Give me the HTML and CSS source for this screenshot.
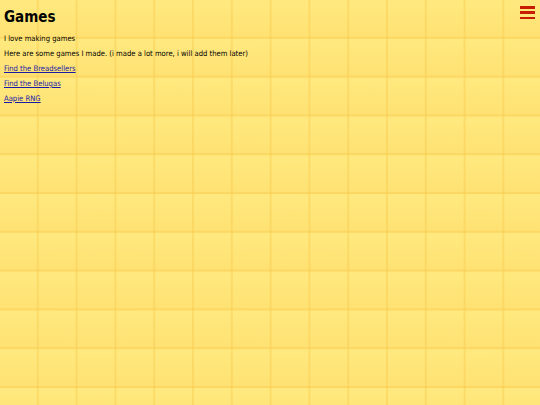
FILE: index.html
```html
<!DOCTYPE html>
<html lang="en">
<head>
<meta charset="utf-8">
<title>Games</title>
<link rel="stylesheet" href="styles.css">
</head>
<body>
<button class="menu" aria-label="Menu"><span></span><span></span><span></span></button>
<h1 class="title">Games</h1>
<p class="text">I love making games</p>
<p class="text">Here are some games I made. (i made a lot more, i will add them later)</p>
<p class="text"><a href="#">Find the Breadsellers</a></p>
<p class="text"><a href="#">Find the Belugas</a></p>
<p class="text"><a href="#">Aapie RNG</a></p>
</body>
</html>
```
FILE: styles.css
```css
html {
  min-height: 100%;
  background-color: #ffe477;
  background-image:
    linear-gradient(to right, transparent 37.3px, rgba(247, 203, 80, 0.45) 37.3px),
    linear-gradient(to bottom, transparent 37.3px, rgba(247, 203, 80, 0.45) 37.3px),
    linear-gradient(to bottom, #ffe97f, #ffe172);
  background-size: 38.8px 38.8px;
}
body {
  margin: 4px;
  font-family: "DejaVu Sans Condensed", "DejaVu Sans", Verdana, sans-serif;
  font-size: 7.6px;
  color: #000;
}
.title {
  font-size: 15px;
  font-weight: bold;
  margin: 4px 0 8px;
}
.text {
  margin: 0 0 6px;
  line-height: 9px;
}
.text a {
  color: #1a1aa6;
}
.menu {
  position: absolute;
  top: 6px;
  right: 5px;
  width: 15px;
  height: 13px;
  padding: 0;
  border: 0;
  background: none;
  display: flex;
  flex-direction: column;
  justify-content: space-between;
}
.menu span {
  display: block;
  height: 2.5px;
  width: 100%;
  background: #c81e00;
}
```
